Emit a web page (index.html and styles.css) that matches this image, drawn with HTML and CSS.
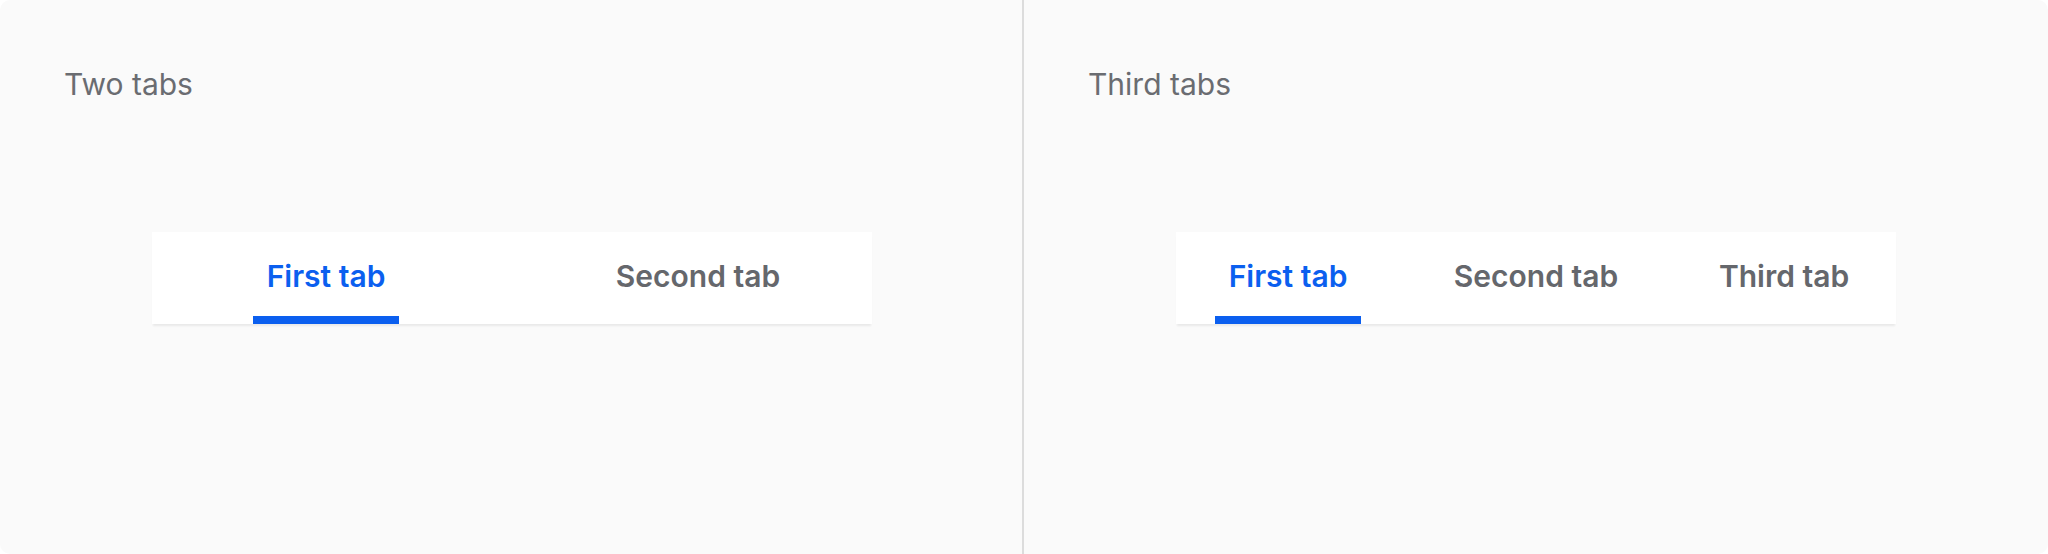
FILE: index.html
```html
<!DOCTYPE html>
<html lang="en">
<head>
<meta charset="utf-8">
<title>Tabs</title>
<link rel="stylesheet" href="styles.css">
</head>
<body>
<div class="frame">
  <section class="panel panel-left">
    <div class="label">Two tabs</div>
    <div class="card">
      <div class="tabs">
        <div class="tab active"><span class="tab-inner"><span class="tab-text">First tab</span><span class="bar"></span></span></div>
        <div class="tab"><span class="tab-inner"><span class="tab-text">Second tab</span><span class="bar"></span></span></div>
      </div>
    </div>
  </section>
  <section class="panel panel-right">
    <div class="label">Third tabs</div>
    <div class="card">
      <div class="tabs">
        <div class="tab active"><span class="tab-inner"><span class="tab-text">First tab</span><span class="bar"></span></span></div>
        <div class="tab"><span class="tab-inner"><span class="tab-text">Second tab</span><span class="bar"></span></span></div>
        <div class="tab"><span class="tab-inner"><span class="tab-text">Third tab</span><span class="bar"></span></span></div>
      </div>
    </div>
  </section>
</div>
</body>
</html>
```

FILE: styles.css
```css
html, body {
  margin: 0;
  padding: 0;
  background: #ffffff;
}

body {
  font-family: Inter, "Noto Sans", sans-serif;
}

.frame {
  width: 2048px;
  height: 554px;
  display: flex;
  background: #fafafa;
  border-radius: 10px;
  overflow: hidden;
}

.panel {
  width: 1024px;
  box-sizing: border-box;
  padding: 64px 0 0 0;
}

.panel-left {
  border-right: 2px solid #dcdcdc;
}

.label {
  padding-left: 64px;
  font-size: 30px;
  line-height: 40px;
  font-weight: 400;
  color: #6a6c71;
}

.card {
  margin: 128px 0 0 152px;
  width: 720px;
  height: 92px;
  background: #ffffff;
  box-shadow: 0 3px 2px -1px rgba(0, 0, 0, 0.07);
}

.tabs {
  display: flex;
  margin: 0 -12px;
  height: 92px;
}

.tab {
  flex: 1 1 0;
  display: flex;
  justify-content: center;
}

.tab-inner {
  display: flex;
  flex-direction: column;
  align-items: stretch;
  height: 92px;
}

.tab-text {
  padding: 24px 14px 0;
  font-size: 30px;
  line-height: 40px;
  font-weight: 600;
  color: #65676c;
  white-space: nowrap;
}

.bar {
  margin-top: auto;
  height: 8px;
  background: transparent;
}

.tab.active .tab-text {
  color: #0b5fef;
}

.tab.active .bar {
  background: #0b5fef;
}
```
